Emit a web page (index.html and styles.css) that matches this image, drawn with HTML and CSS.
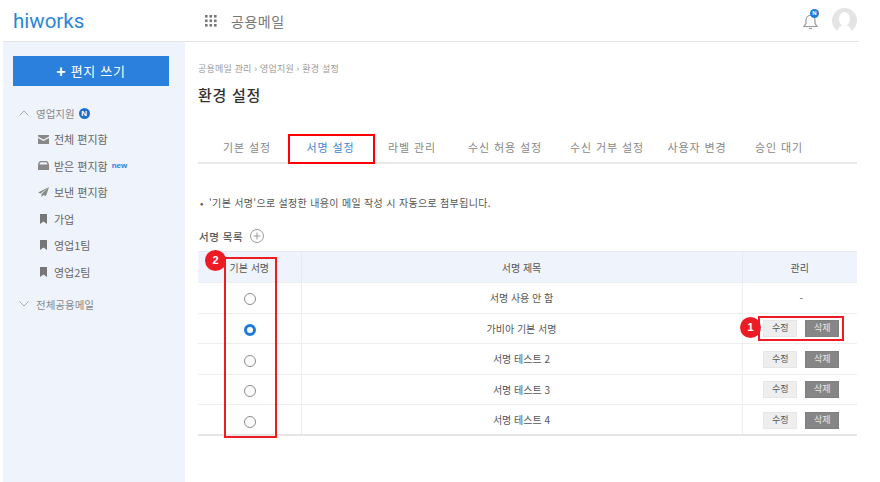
FILE: index.html
```html
<!doctype html>
<html lang="ko">
<head>
<meta charset="utf-8">
<title>hiworks 공용메일 - 환경 설정</title>
<link rel="stylesheet" href="styles.css">
</head>
<body>

<header class="topbar">
  <div class="logo">hiworks</div>
  <svg class="apps" width="12" height="12" viewBox="0 0 12 12" fill="#777">
    <rect x="0" y="0" width="2.6" height="2.6"/><rect x="4.5" y="0" width="2.6" height="2.6"/><rect x="9" y="0" width="2.6" height="2.6"/>
    <rect x="0" y="4.5" width="2.6" height="2.6"/><rect x="4.5" y="4.5" width="2.6" height="2.6"/><rect x="9" y="4.5" width="2.6" height="2.6"/>
    <rect x="0" y="9" width="2.6" height="2.6"/><rect x="4.5" y="9" width="2.6" height="2.6"/><rect x="9" y="9" width="2.6" height="2.6"/>
  </svg>
  <div class="apptitle">공용메일</div>
  <div class="bell">
    <svg width="17" height="18" viewBox="0 0 17 18" fill="none" stroke="#999" stroke-width="1.2">
      <path d="M2 14.500h13l-2-3V8a4.500 4.500 0 0 0-9 0v3.500z"/>
      <path d="M7 16.500h3"/>
    </svg>
    <span class="bellbadge">N</span>
  </div>
  <svg class="avatar" width="25" height="25" viewBox="0 0 25 25">
    <circle cx="12.500" cy="12.500" r="12.500" fill="#e4e4e4"/>
    <ellipse cx="12.500" cy="11" rx="5.500" ry="7" fill="#fff"/>
    <path d="M5 25c1-6 4-8 7.500-8s6.500 2 7.500 8z" fill="#fff"/>
  </svg>
</header>

<div class="main">
  <aside class="side">
    <div class="writebtn"><span class="plus">+</span> 편지 쓰기</div>

    <div class="group">
      <svg class="chev" width="10" height="6" viewBox="0 0 10 6" fill="none" stroke="#aaa"><path d="M.5 5.500 5 1l4.500 4.500"/></svg>
      영업지원 <span class="nbadge">N</span>
    </div>
    <ul class="tree">
      <li>
        <svg width="11" height="9" viewBox="0 0 11 9"><path d="M0 0h11v1.500L5.500 4.500 0 1.500zM0 3l5.500 3L11 3v6H0z" fill="#888"/></svg>
        전체 편지함
      </li>
      <li>
        <svg width="11" height="9" viewBox="0 0 11 9"><path d="M2.500 0h6C10 0 11 2.500 11 4.500V9H0V4.500C0 2.500 1 0 2.500 0zM3 1.200C2.200 1.200 1.700 2.500 1.500 3.500h8c-.2-1-.7-2.300-1.500-2.300z" fill="#888"/></svg>
        받은 편지함 <span class="new">new</span>
      </li>
      <li>
        <svg width="11" height="10" viewBox="0 0 11 10"><path d="M11 0 0 5.500l2.500 1zM11 0 3.500 7v3l2-2 2.500 1z" fill="#888"/></svg>
        보낸 편지함
      </li>
      <li>
        <svg width="11" height="10" viewBox="0 0 11 10"><path d="M2 0h7v10L5.500 7.500 2 10z" fill="#777"/></svg>
        가업
      </li>
      <li>
        <svg width="11" height="10" viewBox="0 0 11 10"><path d="M2 0h7v10L5.500 7.500 2 10z" fill="#777"/></svg>
        영업1팀
      </li>
      <li>
        <svg width="11" height="10" viewBox="0 0 11 10"><path d="M2 0h7v10L5.500 7.500 2 10z" fill="#777"/></svg>
        영업2팀
      </li>
    </ul>
    <div class="group group2">
      <svg class="chev" width="10" height="6" viewBox="0 0 10 6" fill="none" stroke="#aaa"><path d="M.5.500 5 5 9.500.500"/></svg>
      전체공용메일
    </div>
  </aside>

  <div class="content">
    <div class="crumb">공용메일 관리 › 영업지원 › 환경 설정</div>
    <h1>환경 설정</h1>

    <div class="tabs">
      <div>기본 설정</div>
      <div class="on">서명 설정</div>
      <div>라벨 관리</div>
      <div>수신 허용 설정</div>
      <div>수신 거부 설정</div>
      <div>사용자 변경</div>
      <div>승인 대기</div>
    </div>

    <p class="note"><span class="dot">•</span>'기본 서명'으로 설정한 내용이 메일 작성 시 자동으로 첨부됩니다.</p>

    <div class="listhead">
      서명 목록
      <svg width="14" height="14" viewBox="0 0 14 14" fill="none" stroke="#999"><circle cx="7" cy="7" r="6.500"/><path d="M7 3.500v7M3.500 7h7"/></svg>
    </div>

    <table class="signs">
      <colgroup>
        <col class="c1">
        <col class="c2">
        <col class="c3">
      </colgroup>
      <tr>
        <th>기본 서명</th>
        <th>서명 제목</th>
        <th>관리</th>
      </tr>
      <tr>
        <td><span class="radio"></span></td>
        <td>서명 사용 안 함</td>
        <td>-</td>
      </tr>
      <tr>
        <td><span class="radio sel"></span></td>
        <td>가비아 기본 서명</td>
        <td><span class="btn">수정</span><span class="btn del">삭제</span></td>
      </tr>
      <tr>
        <td><span class="radio"></span></td>
        <td>서명 테스트 2</td>
        <td><span class="btn">수정</span><span class="btn del">삭제</span></td>
      </tr>
      <tr>
        <td><span class="radio"></span></td>
        <td>서명 테스트 3</td>
        <td><span class="btn">수정</span><span class="btn del">삭제</span></td>
      </tr>
      <tr>
        <td><span class="radio"></span></td>
        <td>서명 테스트 4</td>
        <td><span class="btn">수정</span><span class="btn del">삭제</span></td>
      </tr>
    </table>
  </div>
</div>

<!-- red callouts drawn over the screenshot -->
<div class="mark mark-tab"></div>
<div class="mark mark-col"></div>
<div class="mark mark-btns"></div>
<div class="pin pin1">1</div>
<div class="pin pin2">2</div>

</body>
</html>
```

FILE: styles.css
```css
* {box-sizing: border-box;}
html, body {margin: 0; padding: 0;}
body {position: relative; width: 880px; height: 482px; overflow: hidden; background: #fff; color: #555; font: 10px "Noto Sans CJK KR", "Noto Sans", sans-serif;}

.topbar {display: flex; align-items: center; height: 42px; margin: 0 21px 0 3px; border-bottom: 1px solid #e4e4e4; position: relative;}
.logo {width: 202px; padding-left: 10px; font: 400 20.500px Roboto, "Noto Sans", sans-serif; color: #2a86d8;}
.apps {margin-right: 14px;}
.apptitle {font-size: 14px; letter-spacing: .5px; color: #777;}
.bell {position: relative; margin-left: auto; margin-right: 13px; height: 18px;}
.bellbadge {position: absolute; top: -3px; right: 0; width: 9px; height: 9px; border-radius: 50%; background: #1f7ad8; color: #fff; font: bold 6px/9px "Liberation Sans", sans-serif; text-align: center;}
.avatar {margin-right: 2px;}

.main {display: flex; height: 440px;}
.side {width: 182px; margin-left: 3px; padding: 14px 0 0 10px; background: #eff4fc;}
.writebtn {width: 156px; height: 30px; background: #2a80dc; color: #fff; font-size: 13px; line-height: 29px; text-align: center; letter-spacing: .7px;}
.plus {font: bold 16px/16px "Liberation Sans", sans-serif; vertical-align: -1px;}
.group {display: flex; align-items: center; margin-top: 17px; height: 20px; padding-left: 6px; font-size: 10.500px; color: #888;}
.chev {margin-right: 7px;}
.nbadge {width: 11px; height: 11px; margin-left: 4px; border-radius: 50%; background: #1f6fd0; color: #fff; font: bold 8px/11px "Liberation Sans", sans-serif; text-align: center;}
.tree {list-style: none; margin: 3px 0 0; padding: 0 0 0 25px;}
.tree li {display: flex; align-items: center; gap: 5px; height: 26.500px; font-size: 11px; color: #666;}
.new {margin-left: -1px; font: bold 8px "Liberation Sans", sans-serif; color: #2a80dc;}
.group2 {margin-top: 9px;}

.content {flex: 1; padding: 20px 0 0 13px;}
.crumb {font-size: 9px; line-height: 14px; color: #999; letter-spacing: .2px;}
h1 {margin: 9px 0 0; font-size: 15px; line-height: 20px; font-weight: 500; color: #333; letter-spacing: .7px;}

.tabs {display: grid; grid-template-columns: 78px 89px 74px 112px 92px 88px 76px; width: 659px; height: 30px; margin-top: 29px; padding-left: 10px; border-bottom: 2px solid #e8e8e8; font-size: 11px; line-height: 26px; text-align: center; color: #888; letter-spacing: .9px;}
.tabs .on {color: #3e86d6;}

.note {display: flex; margin: 32px 0 0; font-size: 10px; line-height: 14px; color: #555; letter-spacing: .32px;}
.dot {width: 11px; padding-left: 2px;}
.listhead {display: flex; align-items: center; gap: 7px; height: 16px; margin-top: 18px; padding-left: 1px; font-size: 10.500px; font-weight: 500; color: #555; letter-spacing: .5px;}

.signs {width: 659px; margin-top: 7px; border-collapse: collapse; table-layout: fixed; border-top: 1px solid #e6ebf3; border-bottom: 2px solid #e6e6e6; font-size: 10px; text-align: center;}
.c1 {width: 103px;}
.c3 {width: 115px;}
.signs th {height: 31px; padding: 0; background: #eff4fc; font-weight: 400; color: #555; border-left: 1px solid #e6ebf3;}
.signs td {height: 30.600px; padding: 0; border-top: 1px solid #eeeeee; border-left: 1px solid #eeeeee; color: #555;}
.signs th:first-child, .signs td:first-child {border-left: 0;}
.signs td:first-child {padding-left: 2px;}
.signs td:last-child {padding-left: 3px;}
.radio {display: inline-block; width: 12px; height: 12px; border: 1px solid #8c8c8c; border-radius: 50%; background: #fff; vertical-align: middle;}
.radio.sel {border: 3.500px solid #1f7ad8;}
.btn {display: inline-block; width: 34px; height: 17px; background: #eeeeee; border: 1px solid #e6e6e6; color: #555; font-size: 9px; line-height: 14px; vertical-align: middle;}
.btn.del {margin-left: 8px; background: #868686; border-color: #808080; color: #e8e8e8;}

.mark {position: absolute; border: 2px solid #f00;}
.mark-tab {left: 288px; top: 134px; width: 87px; height: 30px;}
.mark-col {left: 224px; top: 257px; width: 53px; height: 181px; border-color: #ed1c24;}
.mark-btns {left: 758px; top: 316px; width: 86px; height: 25px; border-color: #ed1c24;}
.pin {position: absolute; width: 21px; height: 21px; border-radius: 50%; background: #ed1c24; color: #fff; font: bold 11px/21px "Liberation Sans", sans-serif; text-align: center;}
.pin1 {left: 740px; top: 317px;}
.pin2 {left: 205px; top: 250px;}
```
